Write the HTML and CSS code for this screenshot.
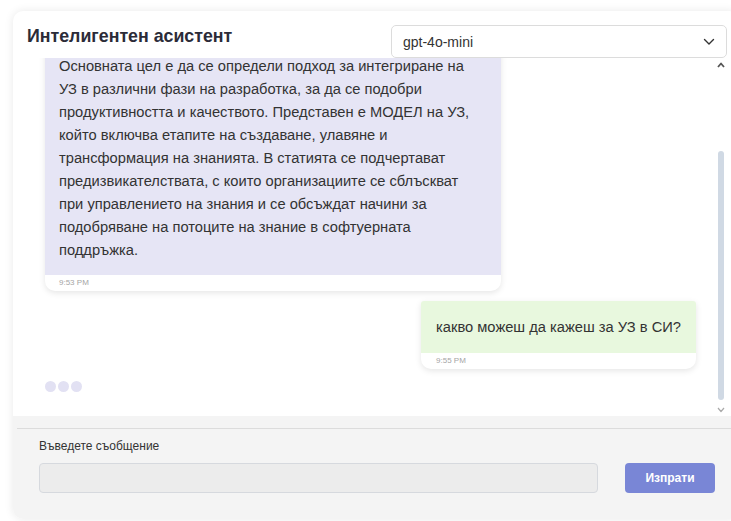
FILE: index.html
```html
<!DOCTYPE html>
<html lang="bg">
<head>
<meta charset="utf-8">
<title>Интелигентен асистент</title>
<link rel="stylesheet" href="styles.css">
</head>
<body>
<div class="card">
  <header class="card-head">
    <h1 class="title">Интелигентен асистент</h1>
    <div class="model-select">
      <select class="model-input" aria-label="Модел">
        <option>gpt-4o-mini</option>
        <option>gpt-4o</option>
      </select>
      <svg class="chevron" width="12" height="8" viewBox="0 0 12 8" aria-hidden="true"><path d="M1.5 1.5 L6 6 L10.5 1.5" fill="none" stroke="#333" stroke-width="1.4" stroke-linecap="round" stroke-linejoin="round"/></svg>
    </div>
  </header>

  <section class="chat">
    <div class="messages">
      <div class="msg msg-bot">
        <p class="msg-body">Основната цел е да се определи подход за интегриране на УЗ в различни фази на разработка, за да се подобри продуктивността и качеството. Представен е МОДЕЛ на УЗ, който включва етапите на създаване, улавяне и трансформация на знанията. В статията се подчертават предизвикателствата, с които организациите се сблъскват при управлението на знания и се обсъждат начини за подобряване на потоците на знание в софтуерната поддръжка.</p>
        <div class="msg-time">9:53 PM</div>
      </div>
      <div class="msg msg-user">
        <p class="msg-body">какво можеш да кажеш за УЗ в СИ?</p>
        <div class="msg-time">9:55 PM</div>
      </div>
      <div class="typing"><span></span><span></span><span></span></div>
    </div>
    <div class="scrollbar" aria-hidden="true">
      <svg class="sb-arrow" width="8" height="6" viewBox="0 0 8 6"><path d="M1 5 L4 1.5 L7 5" fill="none" stroke="#555" stroke-width="1.8" stroke-linejoin="round"/></svg>
      <div class="sb-track"><div class="sb-thumb"></div></div>
      <svg class="sb-arrow" width="8" height="6" viewBox="0 0 8 6"><path d="M1 1 L4 4.5 L7 1" fill="none" stroke="#aaa" stroke-width="1.2" stroke-linejoin="round"/></svg>
    </div>
  </section>

  <form class="composer">
    <div class="composer-inner">
      <label class="composer-label" for="msg">Въведете съобщение</label>
      <div class="composer-row">
        <input id="msg" class="composer-input" type="text">
        <button type="button" class="send-btn">Изпрати</button>
      </div>
    </div>
  </form>
</div>
</body>
</html>
```

FILE: styles.css
```css
* { box-sizing: border-box; }

html, body {
  margin: 0;
  height: 100%;
  overflow: hidden;
  background: #ffffff;
  font-family: "Liberation Sans", Arial, sans-serif;
  color: #333;
}

.card {
  margin: 11px 0 0 13px;
  width: 726px;
  height: 508px;
  background: #fff;
  border-radius: 10px;
  box-shadow: 0 0 10px rgba(0, 0, 0, 0.09);
  display: flex;
  flex-direction: column;
  overflow: hidden;
}

/* header with title and model picker */
.card-head {
  height: 47px;
  flex: none;
  display: flex;
  align-items: flex-start;
  justify-content: space-between;
  padding: 14px 12px 0 14px;
}

.title {
  margin: 0;
  font-size: 17.8px;
  font-weight: 700;
  color: #2b2b38;
  line-height: 20px;
  padding-top: 1px;
}

.model-select {
  position: relative;
  width: 336px;
  height: 33px;
}

.model-input {
  appearance: none;
  -webkit-appearance: none;
  width: 100%;
  height: 100%;
  border: 1px solid #dcdcdc;
  border-radius: 5px;
  background: #fff;
  padding: 0 11px;
  font-family: inherit;
  font-size: 14px;
  color: #333;
  outline: none;
}

.chevron {
  position: absolute;
  right: 12px;
  top: 13px;
  pointer-events: none;
}

/* conversation */
.chat {
  position: relative;
  flex: 1;
  min-height: 0;
  background: #fff;
  overflow: hidden;
}

.messages {
  height: 100%;
  display: flex;
  flex-direction: column;
  justify-content: flex-end;
  padding: 0 43px 24px 32px;
}

.msg {
  flex: none;
  background: #fff;
  border-radius: 3px 3px 10px 10px;
  box-shadow: 0 2px 6px rgba(0, 0, 0, 0.1);
  overflow: hidden;
}

.msg-bot {
  width: 456px;
  align-self: flex-start;
}

.msg-user {
  align-self: flex-end;
  margin-top: 10px;
}

.msg-body {
  margin: 0;
  font-size: 14.7px;
  line-height: 22.9px;
  color: #333;
}

.msg-bot .msg-body {
  background: #e6e5f5;
  padding: 14px 24px 13.5px 14px;
}

.msg-user .msg-body {
  background: #e8f8de;
  padding: 14.5px 15px 14.5px 15px;
}

.msg-time {
  height: 16px;
  line-height: 16px;
  font-size: 8px;
  color: #a5a5a5;
  padding-left: 14px;
}

.msg-user .msg-time { padding-left: 15px; }

.typing {
  display: flex;
  gap: 2px;
  margin-top: 12px;
  height: 11px;
}

.typing span {
  width: 11px;
  height: 11px;
  border-radius: 50%;
  background: #e2e1f3;
}

/* scroll indicator on the right edge of the conversation */
.scrollbar {
  position: absolute;
  left: 704px;
  top: 4px;
  bottom: 3px;
  width: 8px;
  display: flex;
  flex-direction: column;
  align-items: center;
}

.sb-track {
  flex: 1;
  width: 6px;
  padding-top: 83px;
  padding-bottom: 7px;
  display: flex;
}

.sb-thumb {
  flex: 1;
  background: #d0d9e4;
  border-radius: 3px;
}

.sb-arrow { flex: none; }

/* message composer */
.composer {
  flex: none;
  height: 103px;
  background: #f4f4f4;
  padding-top: 12px;
}

.composer-inner {
  border-top: 1px solid #dcdcdc;
  margin-left: 4px;
  padding: 10px 0 0 22px;
}

.composer-label {
  display: block;
  font-size: 12px;
  line-height: 14px;
  color: #333;
  margin-bottom: 10px;
}

.composer-row {
  display: flex;
  align-items: center;
  gap: 27px;
}

.composer-input {
  width: 559px;
  height: 30px;
  background: #ececec;
  border: 1px solid #d6d9de;
  border-radius: 4px;
  outline: none;
}

.send-btn {
  width: 90px;
  height: 30px;
  border: none;
  border-radius: 4px;
  background: #7986d6;
  color: #fff;
  font-family: inherit;
  font-size: 12px;
  font-weight: 700;
}
```
